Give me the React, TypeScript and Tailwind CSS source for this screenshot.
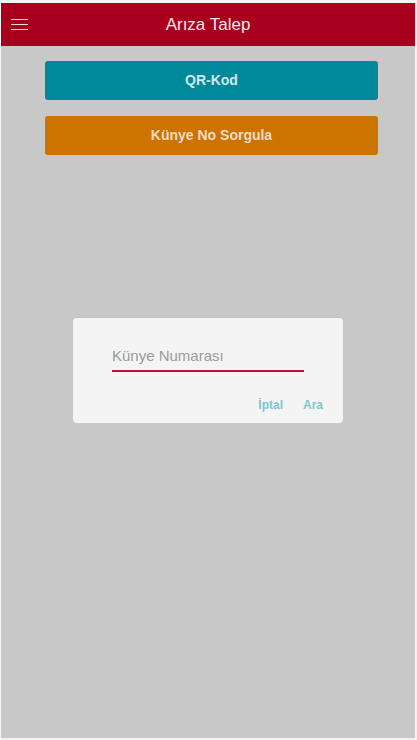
export default function App() {
  return (
    <div
      className="w-[417px] h-[740px] bg-[#f4f4f4] pt-[3px] pl-[1px] pr-[2px] pb-[2px]"
      style={{ fontFamily: '"Liberation Sans", Arial, sans-serif' }}
    >
      <div className="h-full flex flex-col bg-[#c8c8c8]">
        {/* Header */}
        <div className="h-[43px] bg-[#a8001c] flex items-center relative">
          <div className="pl-[10px] flex flex-col gap-[4px]">
            <span className="block w-[17px] h-[1px] bg-[#f2d6da]" />
            <span className="block w-[17px] h-[1px] bg-[#f2d6da]" />
            <span className="block w-[17px] h-[1px] bg-[#f2d6da]" />
          </div>
          <div className="absolute inset-0 flex items-center justify-center text-[17px] text-[#f6e8ea] pointer-events-none">
            Arıza Talep
          </div>
        </div>

        {/* Buttons */}
        <div className="pl-[44px] pr-[37px] pt-[15px] flex flex-col gap-[16px]">
          <button className="h-[39px] rounded-[3px] bg-[#00899b] text-[#d7e7ea] text-[14px] font-bold">
            QR-Kod
          </button>
          <button className="h-[39px] rounded-[3px] bg-[#cc7300] text-[#f0dcc8] text-[14px] font-bold">
            Künye No Sorgula
          </button>
        </div>

        {/* Dialog */}
        <div className="flex justify-center mt-[163px]">
          <div className="w-[270px] h-[105px] bg-[#f4f4f4] rounded-[4px] pl-[39px] pt-[29px]">
            <div className="w-[192px] border-b-2 border-[#c8102e] pb-[5px] text-[15px] text-[#9a9a9a] leading-[18px]">
              Künye Numarası
            </div>
            <div className="flex justify-end gap-[20px] mt-[24px] pr-[20px] text-[12px] font-bold text-[#7cc8cb]">
              <span>İptal</span>
              <span>Ara</span>
            </div>
          </div>
        </div>
      </div>
    </div>
  );
}
